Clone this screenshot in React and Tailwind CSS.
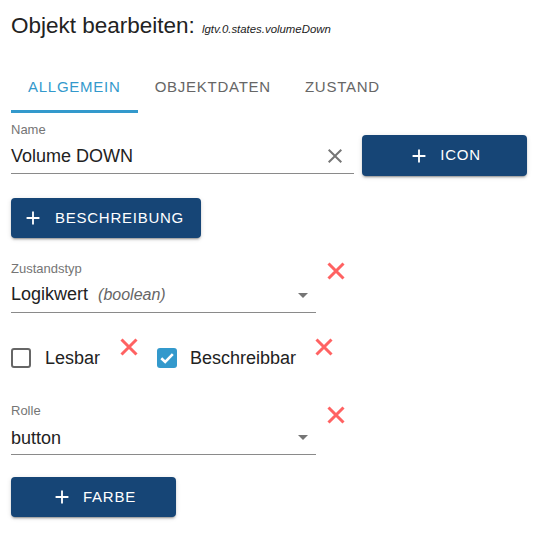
import React from 'react';

const PlusIcon = () => (
  <svg viewBox="0 0 24 24" className="h-[22px] w-[22px] fill-current shrink-0">
    <path d="M19 13h-6v6h-2v-6H5v-2h6V5h2v6h6v2z" />
  </svg>
);

const RedX = ({ className = '' }) => (
  <svg viewBox="0 0 20 20" className={`h-[20px] w-[20px] shrink-0 ${className}`}>
    <path d="M2.5 2.5 17.5 17.5M17.5 2.5 2.5 17.5" stroke="#ff6262" strokeWidth="3" />
  </svg>
);

const DropArrow = () => (
  <svg viewBox="0 0 24 24" className="h-[24px] w-[24px] fill-[#757575] shrink-0">
    <path d="M7 10l5 5 5-5z" />
  </svg>
);

function BlueButton({ children, className = '' }) {
  return (
    <button
      type="button"
      className={`flex items-center gap-[10px] rounded-[4px] bg-[#164576] text-[15px] uppercase tracking-[0.05em] text-white shadow-[0_3px_1px_-2px_rgba(0,0,0,0.2),0_2px_2px_0_rgba(0,0,0,0.14),0_1px_5px_0_rgba(0,0,0,0.12)] ${className}`}
    >
      <PlusIcon />
      <span>{children}</span>
    </button>
  );
}

function SelectField({ label, children }) {
  return (
    <div className="w-[305px]">
      <div className="h-[16px] text-[13px] leading-[16px] text-[#757575]">{label}</div>
      <div className="mt-[5px] flex h-[31px] items-start justify-between border-b border-[#8a8a8a] pb-[6px]">
        <div className="h-[24px] text-[18px] leading-[24px] text-[#222]">{children}</div>
        <div className="mr-[1px] mt-[1px]">
          <DropArrow />
        </div>
      </div>
    </div>
  );
}

export default function App() {
  return (
    <div className="h-[558px] w-[553px] bg-white pl-[11px] font-['Liberation_Sans',Arial,sans-serif] text-[#222]">
      <div className="flex h-[28px] items-baseline pt-[12px] box-content">
        <span className="text-[22.5px] leading-[28px]">Objekt bearbeiten:</span>
        <span className="ml-[7px] text-[11.4px] italic">lgtv.0.states.volumeDown</span>
      </div>

      <div className="mt-[25px] flex h-[48px] text-[15px] uppercase tracking-[0.05em]">
        <div className="flex items-center border-b-[3px] border-[#3399cc] px-[17px] text-[#3399cc]">Allgemein</div>
        <div className="flex items-center border-b-[3px] border-transparent px-[17px] text-[#666]">Objektdaten</div>
        <div className="flex items-center border-b-[3px] border-transparent px-[17px] text-[#666]">Zustand</div>
      </div>

      <div className="mt-[9px] flex items-start">
        <div className="w-[343px]">
          <div className="h-[16px] text-[13px] leading-[16px] text-[#757575]">Name</div>
          <div className="mt-[6px] flex h-[30px] items-start justify-between border-b border-[#8a8a8a] pb-[5px]">
            <div className="h-[24px] text-[18px] leading-[24px]">Volume DOWN</div>
            <svg viewBox="0 0 24 24" className="mr-[7px] h-[24px] w-[24px] fill-[#757575]">
              <path d="M19 6.41 17.59 5 12 10.59 6.41 5 5 6.41 10.59 12 5 17.59 6.41 19 12 13.41 17.59 19 19 17.59 13.41 12z" />
            </svg>
          </div>
        </div>
        <BlueButton className="ml-[8px] mt-[13px] h-[41px] w-[165px] justify-center">Icon</BlueButton>
      </div>

      <BlueButton className="mt-[22px] h-[40px] gap-[11px] pl-[11px] pr-[17px]">Beschreibung</BlueButton>

      <div className="mt-[23px] flex items-start">
        <SelectField label="Zustandstyp">
          Logikwert <span className="ml-[5px] text-[16px] italic text-[#666]">(boolean)</span>
        </SelectField>
        <RedX className="ml-[10px]" />
      </div>

      <div className="mt-[24px] flex h-[32px] items-start">
        <div className="mt-[11px] flex items-center">
          <div className="h-[20px] w-[20px] rounded-[3px] border-[2px] border-[#666]" />
          <span className="ml-[14px] text-[18px] leading-[20px]">Lesbar</span>
        </div>
        <RedX className="ml-[19px]" />
        <div className="ml-[18px] mt-[11px] flex items-center">
          <div className="flex h-[20px] w-[20px] items-center justify-center rounded-[3px] bg-[#3399cc]">
            <svg viewBox="0 0 20 20" className="h-[20px] w-[20px]">
              <path d="M4.3 10.2 8.2 14 15.8 6.2" stroke="#fff" strokeWidth="2.6" fill="none" />
            </svg>
          </div>
          <span className="ml-[13px] text-[18px] leading-[20px]">Beschreibbar</span>
        </div>
        <RedX className="ml-[18px]" />
      </div>

      <div className="mt-[34px] flex items-start">
        <SelectField label="Rolle">
          <span className="relative top-[2px]">button</span>
        </SelectField>
        <RedX className="ml-[10px] mt-[2px]" />
      </div>

      <BlueButton className="mt-[22px] h-[40px] w-[165px] justify-center">Farbe</BlueButton>
    </div>
  );
}
